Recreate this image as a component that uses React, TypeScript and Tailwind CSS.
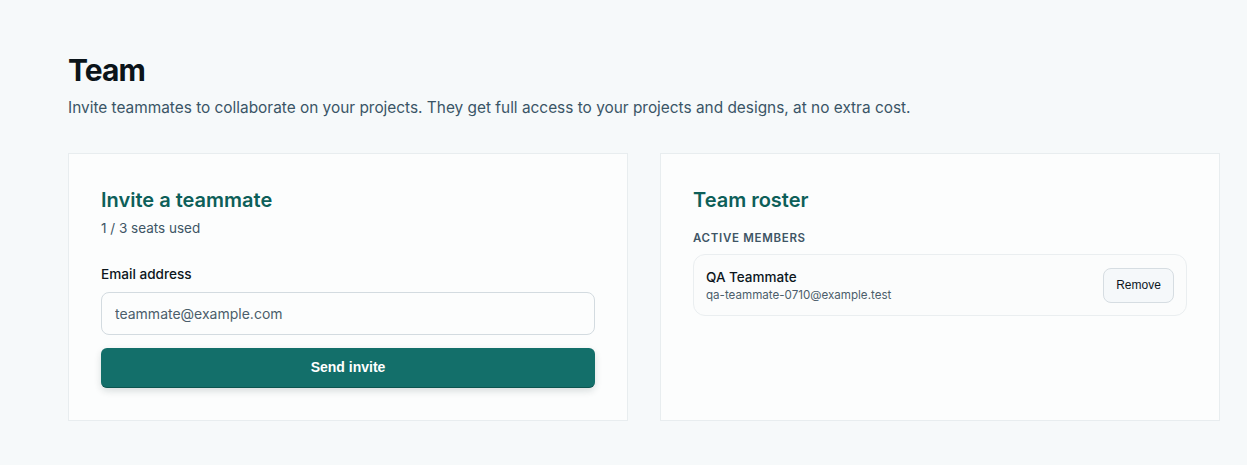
import React from 'react';

const TeamPage: React.FC = () => {
  return (
    <div className="min-h-screen bg-[#f6f9fa] font-['Inter',sans-serif] text-[#0c161c]">
      <div className="w-[1152px] ml-[68px] pt-[52px] pb-10">
        {/* Header */}
        <h1 className="text-[30px] leading-9 font-bold tracking-[-0.03em] text-[#0b1419]">Team</h1>
        <p className="mt-2 text-[15.4px] leading-6 text-[#3a5566]">
          Invite teammates to collaborate on your projects. They get full access to your projects and designs, at no extra cost.
        </p>

        <div className="mt-[33px] grid grid-cols-[560px_560px] gap-[32px]">
          {/* Invite card */}
          <section className="bg-[#fcfdfd] border border-[#e8edef] p-8">
            <h2 className="text-[20px] leading-7 font-semibold text-[#0d5f59]">Invite a teammate</h2>
            <p className="mt-1 text-[13.5px] leading-5 text-[#3e5565]">1 / 3 seats used</p>

            <form className="mt-[26px]" onSubmit={(e) => e.preventDefault()}>
              <label className="block text-[13.6px] leading-5 font-medium text-[#0c161c]">Email address</label>
              <input
                type="email"
                placeholder="teammate@example.com"
                className="mt-2 block w-full h-[43px] rounded-lg border border-[#d3dbe0] bg-[#fcfdfd] px-[13px] text-[14px] text-[#0c161c] placeholder:text-[#4b5e6b] outline-none"
              />
              <button
                type="submit"
                className="mt-[13px] w-full h-10 rounded-md bg-[#136f6a] border-b border-[#0c544f] font-['Liberation_Sans',sans-serif] text-[14px] font-bold text-white shadow-[0_3px_7px_rgba(15,40,40,0.15)]"
              >
                Send invite
              </button>
            </form>
          </section>

          {/* Roster card */}
          <section className="bg-[#fcfdfd] border border-[#e8edef] p-8">
            <h2 className="text-[20px] leading-7 font-semibold text-[#0d5f59]">Team roster</h2>
            <h3 className="mt-4 text-[11.5px] leading-4 font-semibold uppercase tracking-[0.06em] text-[#3e5565]">Active members</h3>

            <ul className="mt-2">
              <li className="flex items-center justify-between rounded-xl border border-[#eaeef0] bg-[#fbfcfc] px-3 py-3">
                <div>
                  <div className="text-[13.5px] leading-5 font-medium text-[#0c161c]">QA Teammate</div>
                  <div className="text-[11.6px] leading-4 text-[#4b5e6b]">qa-teammate-0710@example.test</div>
                </div>
                <button className="h-[35px] w-[71px] rounded-lg border border-[#d6dde2] bg-[#f5f8fa] font-['Liberation_Sans',sans-serif] text-[12px] text-[#0c161c]">
                  Remove
                </button>
              </li>
            </ul>
          </section>
        </div>
      </div>
    </div>
  );
};

export default TeamPage;
